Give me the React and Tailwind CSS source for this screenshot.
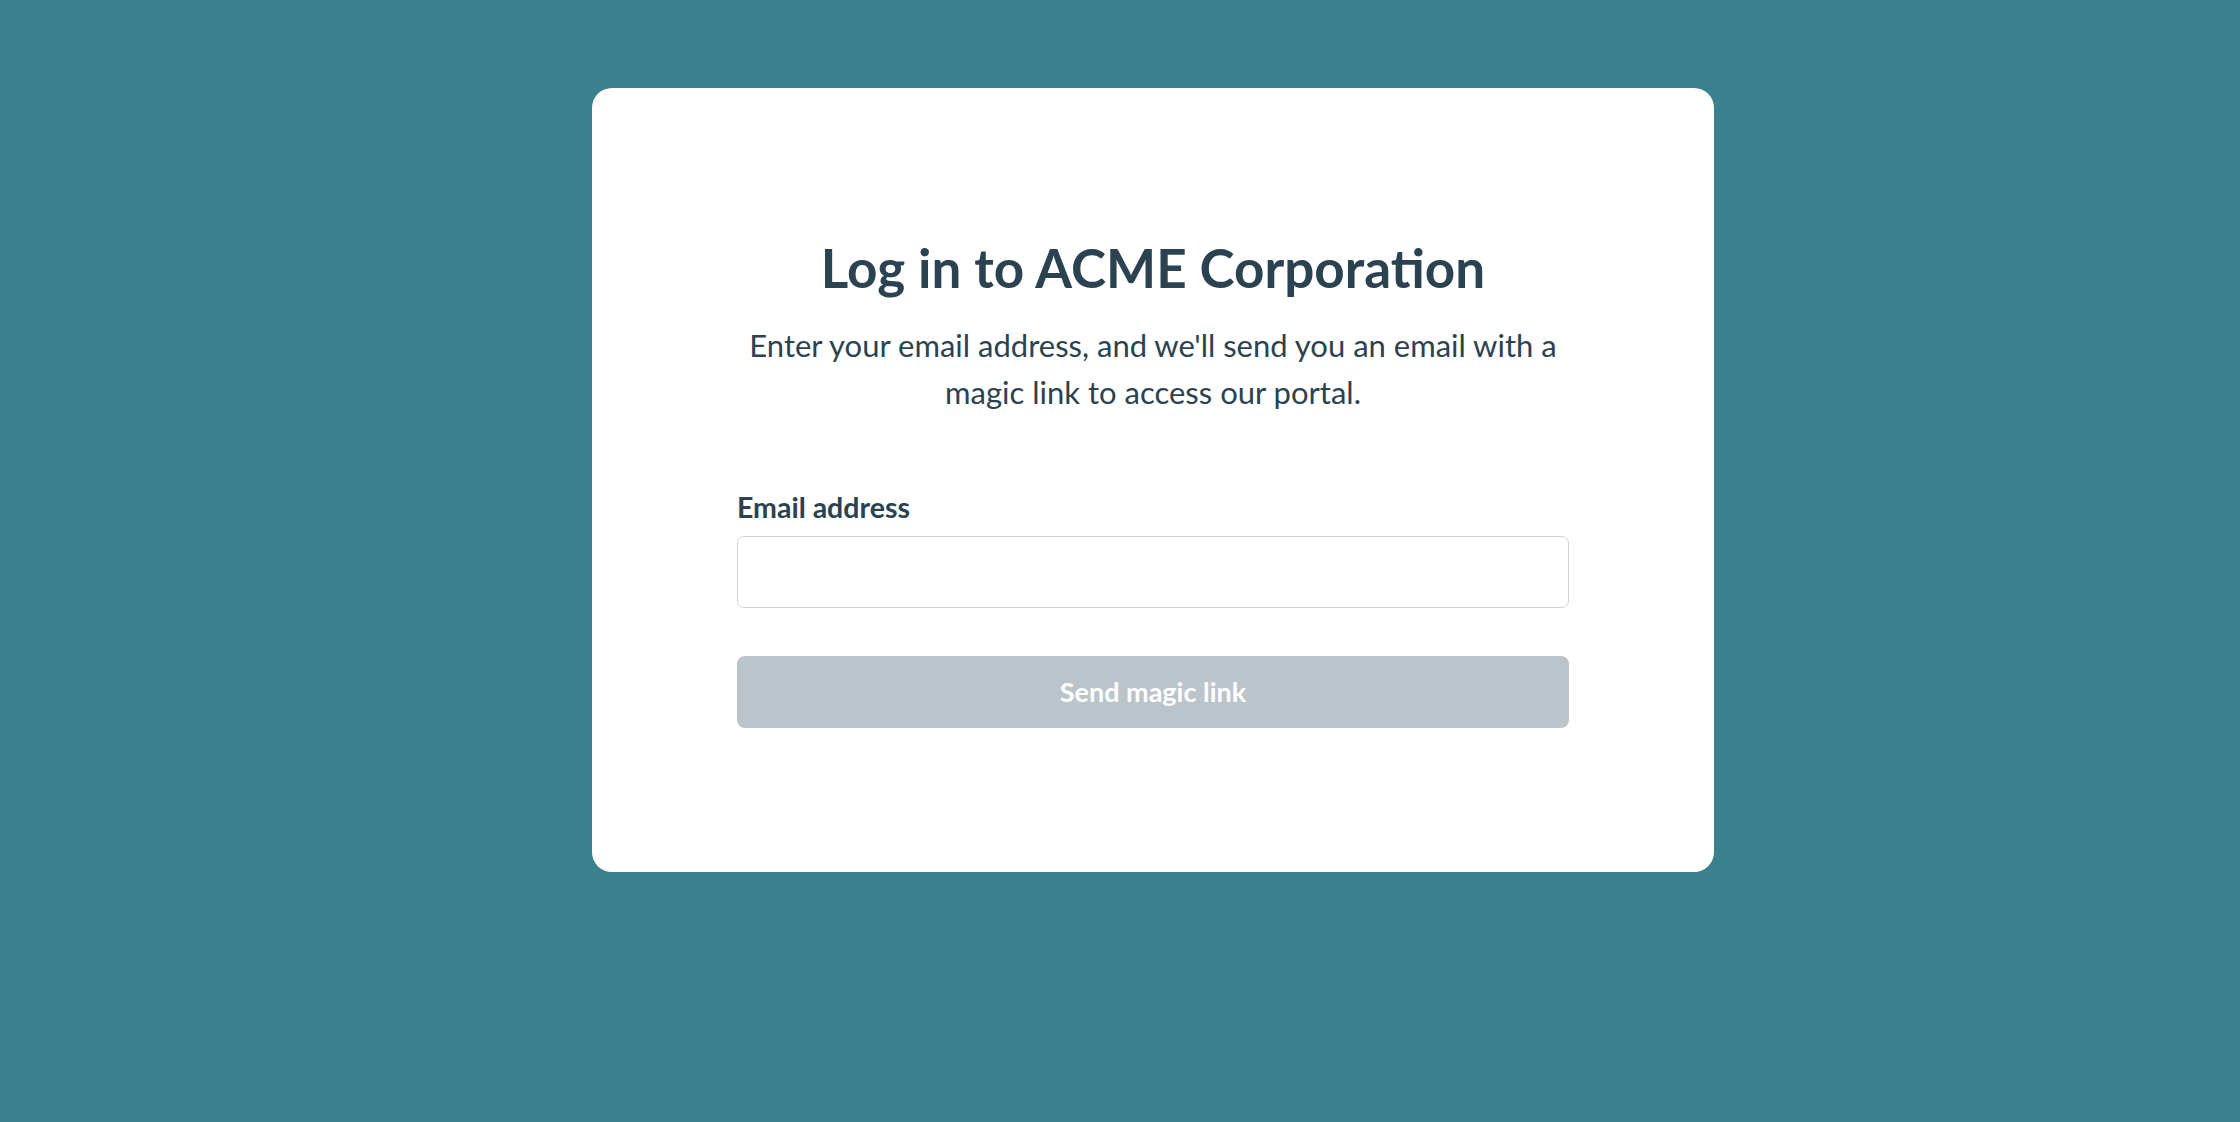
export default function App() {
  return (
    <div className="min-h-[1122px] w-full bg-[#3b808d] pl-[592px] pt-[88px]" style={{ fontFamily: 'Lato, "Open Sans", sans-serif' }}>
      <div className="flex h-[784px] w-[1122px] flex-col items-center rounded-[20px] bg-white px-[146px] pt-[150px]">
        <h1 className="text-[53px] font-bold leading-[60px] text-[#2b4250]">Log in to ACME Corporation</h1>
        <p className="mt-[24px] text-center text-[31px] leading-[47px] text-[#2b4250]">
          Enter your email address, and we'll send you an email with a<br />magic link to access our portal.
        </p>
        <div className="mt-[74px] flex w-[832px] flex-col">
          <label className="text-[28.5px] font-bold leading-[34px] text-[#2b4250]">Email address</label>
          <input type="email" className="mt-[12px] h-[72px] w-full rounded-[7px] border-[1.5px] border-[#cfd4da] bg-white px-4 text-[28px] outline-none" />
          <button type="button" className="mt-[48px] h-[72px] w-full rounded-[8px] bg-[#bcc4cb] text-[27px] font-bold text-white">
            Send magic link
          </button>
        </div>
      </div>
    </div>
  );
}
